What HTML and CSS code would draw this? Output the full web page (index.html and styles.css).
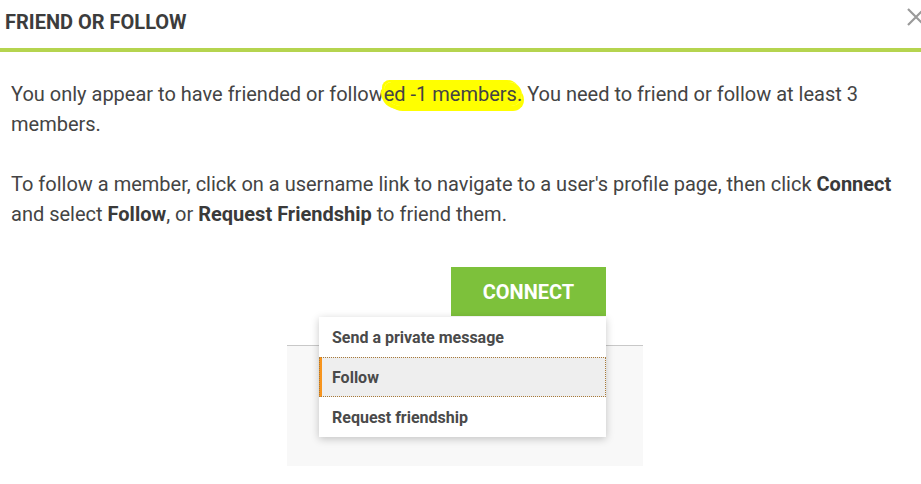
FILE: index.html
```html
<!DOCTYPE html>
<html>
<head>
<meta charset="utf-8">
<link rel="stylesheet" href="styles.css">
</head>
<body>
<div class="dialog">
  <div class="header">
    <h1 class="title">FRIEND OR FOLLOW</h1>
    <svg class="close" width="18" height="18" viewBox="0 0 18 18"><path d="M1 1 L17 17 M17 1 L1 17" stroke="#9a9a9a" stroke-width="2.2" fill="none"/></svg>
  </div>
  <div class="content">
    <p class="para">You only appear to have friended or follow<span class="hl">ed -1 members.</span> You need to friend or follow at least 3 members.</p>
    <p class="para">To follow a member, click on a username link to navigate to a user's profile page, then click <b>Connect</b> and select <b>Follow</b>, or <b>Request Friendship</b> to friend them.</p>
    <div class="figure">
      <div class="connect">CONNECT</div>
      <div class="menu">
        <div class="item">Send a private message</div>
        <div class="item active">Follow</div>
        <div class="item">Request friendship</div>
      </div>
    </div>
  </div>
</div>
</body>
</html>
```
FILE: styles.css
```css
html, body {
  margin: 0;
  padding: 0;
  background: #fff;
  overflow: hidden;
}
body {
  font-family: Roboto, "Liberation Sans", sans-serif;
  color: #444;
}
.dialog {
  width: 921px;
}
.header {
  display: flex;
  justify-content: space-between;
  align-items: flex-start;
  height: 48px;
  border-bottom: 4px solid #b5d44f;
  padding-left: 5px;
}
.title {
  margin: 0;
  padding-top: 10px;
  font-size: 20px;
  font-weight: 700;
  color: #3c3c3c;
  line-height: 24px;
}
.close {
  margin-top: 8px;
  margin-right: -4px;
}
.content {
  padding: 27px 0 0 11px;
}
.para {
  margin: 0 0 30px 0;
  font-size: 20px;
  line-height: 30px;
  color: #444;
  width: 890px;
}
.para b {
  font-weight: 700;
  color: #3a3a3a;
}
.hl {
  background: #ffff00;
  border-radius: 8px 14px 12px 18px;
  box-shadow: -2px -2px 0 #ffff00, 2px 5px 0 #ffff00, -3px 3px 0 #ffff00;
}
.figure {
  margin-top: 38px;
  margin-left: 276px;
  width: 356px;
  height: 199px;
  background: linear-gradient(to bottom, #fff 0, #fff 78px, #c8c8c8 78px, #c8c8c8 79px, #f8f8f8 79px, #f8f8f8 100%);
  display: flex;
  flex-direction: column;
  align-items: flex-start;
}
.connect {
  margin-left: 164px;
  width: 155px;
  height: 49px;
  background: #7dc13b;
  color: #fff;
  font-weight: 700;
  font-size: 20px;
  display: flex;
  align-items: center;
  justify-content: center;
}
.menu {
  margin-left: 32px;
  margin-top: 1px;
  width: 287px;
  background: #fff;
  box-shadow: 0 2px 8px rgba(0,0,0,0.22);
}
.item {
  height: 40px;
  display: flex;
  align-items: center;
  padding-left: 13px;
  font-size: 16px;
  font-weight: 700;
  color: #4a4a4a;
  box-sizing: border-box;
}
.item.active {
  background: #eeeeee;
  border-left: 3px solid #f7941d;
  padding-left: 10px;
  outline: 1px dotted #a87a3a;
  outline-offset: -1px;
}
```
